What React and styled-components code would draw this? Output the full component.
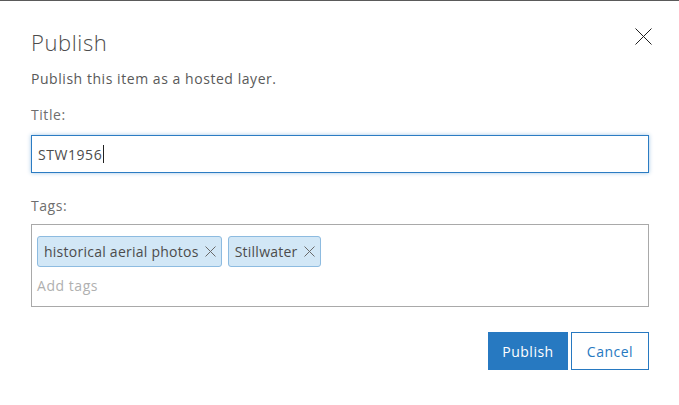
import React from 'react';
import styled, { createGlobalStyle } from 'styled-components';

const GlobalStyle = createGlobalStyle`
  html, body {
    margin: 0;
    padding: 0;
    background: #ffffff;
  }
  body {
    font-family: "Open Sans", "Liberation Sans", sans-serif;
    letter-spacing: 0.55px;
  }
`

const Dialog = styled.div`
  box-sizing: border-box;
  width: 679px;
  height: 405px;
  border-top: 1px solid #5a5a5a;
  background: #ffffff;
  padding: 27px 30px 0 31px;
  display: flex;
  flex-direction: column;
`

const Header = styled.div`
  display: flex;
  justify-content: space-between;
  align-items: flex-start;
`

const Heading = styled.h2`
  margin: 0;
  font-size: 22px;
  line-height: 28px;
  font-weight: 300;
  letter-spacing: 0.6px;
  color: #4c4c4c;
`

const CloseButton = styled.button`
  border: none;
  background: none;
  padding: 0;
  margin: 0 -3px 0 0;
  width: 17px;
  height: 17px;
  display: flex;
  cursor: pointer;
`

const Intro = styled.p`
  margin: 13px 0 0;
  font-size: 14px;
  line-height: 20px;
  color: #595959;
`

const Label = styled.label`
  display: block;
  margin-top: ${p => p.$top}px;
  font-size: 14px;
  line-height: 20px;
  color: #6e6e6e;
`

const TextInput = styled.div`
  box-sizing: border-box;
  margin-top: 10px;
  height: 38px;
  border: 1px solid #2b7cc3;
  box-shadow: 0 0 4px rgba(43, 124, 195, 0.45);
  padding: 0 6px;
  display: flex;
  align-items: center;
  font-size: 14px;
  color: #4c4c4c;
`

const Caret = styled.span`
  display: inline-block;
  width: 1px;
  height: 18px;
  background: #222;
  margin-left: 1px;
`

const TagBox = styled.div`
  box-sizing: border-box;
  margin-top: 8px;
  height: 83px;
  border: 1px solid #a9a9a9;
  padding: 11px 5px 0;
  display: flex;
  flex-direction: column;
`

const ChipRow = styled.div`
  display: flex;
  gap: 6px;
`

const Chip = styled.span`
  box-sizing: border-box;
  height: 31px;
  display: inline-flex;
  align-items: center;
  gap: 6px;
  padding: 0 5px 0 6px;
  background: #d2e7f6;
  border: 1px solid #8dbbe0;
  border-radius: 3px;
  font-size: 14px;
  letter-spacing: 0.25px;
  color: #4c4c4c;
`

const Placeholder = styled.span`
  margin-top: 9px;
  font-size: 14px;
  line-height: 20px;
  color: #b0b0b0;
`

const Footer = styled.div`
  margin-top: 25px;
  display: flex;
  justify-content: flex-end;
  gap: 3px;
`

const Button = styled.button`
  box-sizing: border-box;
  height: 38px;
  width: ${p => p.$w}px;
  border: 1px solid #2779c1;
  background: ${p => (p.$primary ? '#2779c1' : '#ffffff')};
  color: ${p => (p.$primary ? '#ffffff' : '#2779c1')};
  font-family: "Open Sans", "Liberation Sans", sans-serif;
  font-size: 14px;
  letter-spacing: 0.5px;
  padding: 0;
  cursor: pointer;
`

const CloseIcon = () => (
  <svg width="17" height="17" viewBox="0 0 17 17">
    <path d="M0.5 0.5 L16.5 16.5 M16.5 0.5 L0.5 16.5" stroke="#1f1f1f" strokeWidth="1" fill="none" />
  </svg>
)

const SmallX = () => (
  <svg width="11" height="11" viewBox="0 0 11 11">
    <path d="M0.5 0.5 L10.5 10.5 M10.5 0.5 L0.5 10.5" stroke="#6a6a6a" strokeWidth="1" fill="none" />
  </svg>
)

export default function App() {
  const tags = ['historical aerial photos', 'Stillwater']
  return (
    <>
      <GlobalStyle />
      <Dialog>
        <Header>
          <Heading>Publish</Heading>
          <CloseButton aria-label="Close"><CloseIcon /></CloseButton>
        </Header>
        <Intro>Publish this item as a hosted layer.</Intro>

        <Label $top={16}>Title:</Label>
        <TextInput>STW1956<Caret /></TextInput>

        <Label $top={23}>Tags:</Label>
        <TagBox>
          <ChipRow>
            {tags.map(t => (
              <Chip key={t}>{t}<SmallX /></Chip>
            ))}
          </ChipRow>
          <Placeholder>Add tags</Placeholder>
        </TagBox>

        <Footer>
          <Button $primary $w={80}>Publish</Button>
          <Button $w={78}>Cancel</Button>
        </Footer>
      </Dialog>
    </>
  )
}
